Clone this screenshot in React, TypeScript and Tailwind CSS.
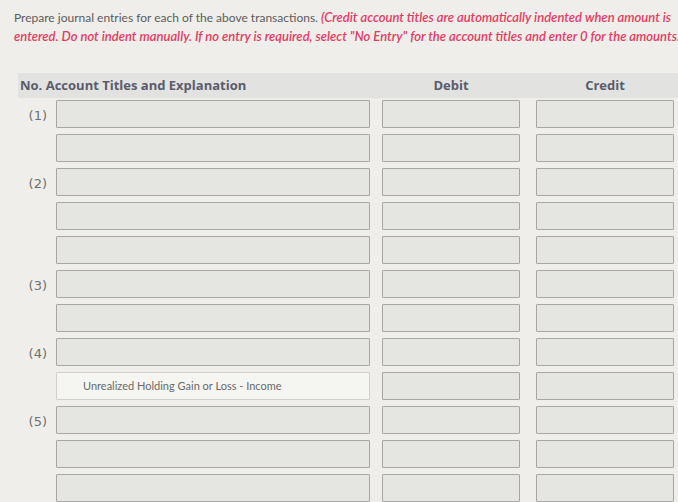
const rows: { label?: string; text?: string }[] = [
  { label: '(1)' },
  {},
  { label: '(2)' },
  {},
  {},
  { label: '(3)' },
  {},
  { label: '(4)' },
  { text: 'Unrealized Holding Gain or Loss - Income' },
  { label: '(5)' },
  {},
  {},
]

function Box(props: { width: string; text?: string }) {
  const filled = props.text !== undefined
  return (
    <div
      className={`${props.width} h-[28px] rounded-[1px] border-[1.5px] flex items-center ${
        filled ? 'border-[#d0d0cd] bg-[#f5f5f2]' : 'border-[#a6a6a3] bg-[#e5e5e2]'
      }`}
    >
      {filled && <span className="pl-[26px] text-[11px] text-[#6a6a6a]">{props.text}</span>}
    </div>
  )
}

export default function App() {
  return (
    <div className="w-[678px] h-[502px] overflow-hidden bg-[#efeeea] font-['Lato','Liberation_Sans',sans-serif]">
      <div className="pl-[14px] pt-[8px] text-[12px] leading-[19px] whitespace-nowrap">
        <div>
          <span className="text-[#5c5c5c]">Prepare journal entries for each of the above transactions. </span>
          <span className="italic font-semibold text-[13px] text-[#e23c64]">
            (Credit account titles are automatically indented when amount is
          </span>
        </div>
        <div className="italic font-semibold text-[13px] text-[#e23c64]">
          entered. Do not indent manually. If no entry is required, select "No Entry" for the account titles and enter 0 for the amounts.)
        </div>
      </div>

      <div className="ml-[18px] mt-[27px] h-[25px] bg-[#e2e2e0] flex items-center text-[13px] font-bold text-[#5a5c6c] font-['Open_Sans',sans-serif]">
        <div className="w-[352px] pl-[2px]">No. Account Titles and Explanation</div>
        <div className="ml-[12px] w-[138px] text-center">Debit</div>
        <div className="ml-[16px] w-[138px] text-center">Credit</div>
      </div>

      <div className="mt-[2px] flex flex-col gap-[6px]">
        {rows.map((r, i) => (
          <div key={i} className="flex items-center">
            <div className="w-[56px] pr-[9px] text-right text-[13px] text-[#707070] font-['DejaVu_Sans',sans-serif] pt-[3px]">
              {r.label}
            </div>
            <Box width="w-[314px]" text={r.text} />
            <div className="ml-[12px]">
              <Box width="w-[138px]" />
            </div>
            <div className="ml-[16px]">
              <Box width="w-[138px]" />
            </div>
          </div>
        ))}
      </div>
    </div>
  )
}
